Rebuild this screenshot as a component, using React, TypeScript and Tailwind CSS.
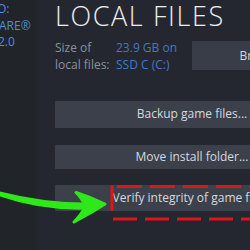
import React from 'react';

const font = { fontFamily: '"Open Sans", "Noto Sans", sans-serif' };

function Btn({ label, className }: { label: string; className: string }) {
  return (
    <div
      className={`flex shrink-0 items-center justify-center bg-[#3b404b] text-[12px] text-[#d6d9de] ${className}`}
    >
      <span className="whitespace-nowrap">{label}</span>
    </div>
  );
}

export default function App() {
  return (
    <div className="relative flex h-[250px] w-[250px] overflow-hidden bg-[#24272f]" style={font}>
      <aside className="w-[37px] shrink-0 bg-[#212429] pt-[1px] text-[12px] leading-[16.5px] text-[#4f8fd8]">
        <div className="-ml-[3px] whitespace-nowrap">O:</div>
        <div className="-ml-[1px] whitespace-nowrap">ARE®</div>
        <div className="-ml-[2px] whitespace-nowrap">2.0</div>
      </aside>

      <main className="flex flex-1 flex-col pl-[18px]">
        <h1 className="mt-[-4px] whitespace-nowrap text-[27px] font-light tracking-[1.6px] text-[#eceef0]">
          LOCAL FILES
        </h1>

        <div className="mt-[2px] flex items-center">
          <div className="w-[61px] text-[12px] leading-[17px] text-[#8a929b]">
            <div>Size of</div>
            <div>local files:</div>
          </div>
          <div className="w-[76px] whitespace-nowrap text-[12px] leading-[17px] text-[#4677c0]">
            <div>23.9 GB on</div>
            <div>SSD C (C:)</div>
          </div>
          <Btn label="Browse..." className="h-[29px] w-[146px] bg-[#383d47]" />
        </div>

        <Btn label="Backup game files..." className="mt-[28px] h-[27px] w-[274px]" />
        <Btn label="Move install folder..." className="mt-[17px] h-[24px] w-[274px]" />
        <Btn label="Verify integrity of game files..." className="mt-[16px] h-[26px] w-[280px]" />
      </main>

      <svg className="pointer-events-none absolute left-0 top-0" width="250" height="250" viewBox="0 0 250 250">
        <line x1="112" y1="185" x2="112" y2="211" stroke="#e3131b" strokeWidth="3" />
        <line x1="117" y1="186.5" x2="260" y2="186.5" stroke="#e3131b" strokeWidth="3" strokeDasharray="25 8" />
        <line x1="113" y1="219" x2="260" y2="219" stroke="#e3131b" strokeWidth="3" strokeDasharray="24 8" />
        <path
          d="M0 191.5 Q45 203 88 202.5 L88 209.5 Q42 211 0 196.5 Z"
          fill="#2ee81a"
        />
        <path
          d="M76 192.5 Q90 197 105 204 Q91 213 74 222 Q83 213 85 206 Q82 198 76 192.5 Z"
          fill="#2ee81a"
          stroke="#2ee81a"
          strokeWidth="3"
          strokeLinejoin="round"
        />
      </svg>
    </div>
  );
}
